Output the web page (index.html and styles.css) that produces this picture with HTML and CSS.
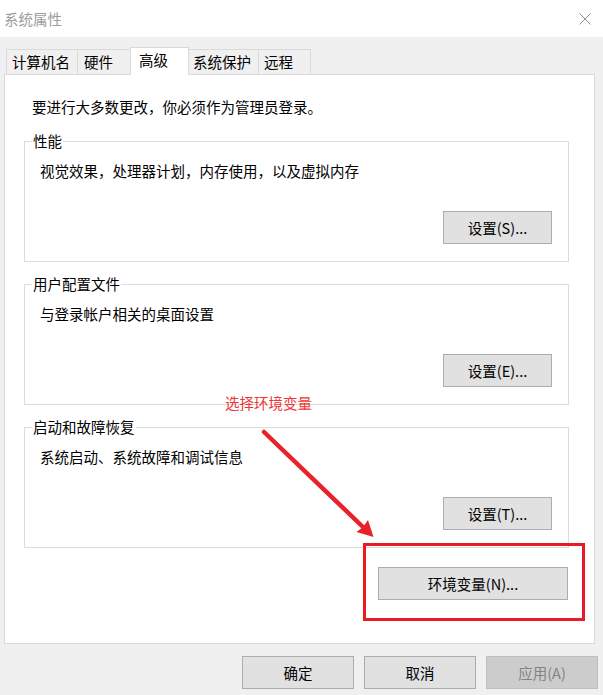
FILE: index.html
```html
<!DOCTYPE html>
<html lang="zh-CN">
<head>
<meta charset="utf-8">
<title>系统属性</title>
<link rel="stylesheet" href="styles.css">
</head>
<body>
<div class="titlebar">
  <span class="title">系统属性</span>
  <svg class="close" width="12" height="12" viewBox="0 0 12 12"><path d="M0.5 0.5 L11.5 11.5 M11.5 0.5 L0.5 11.5" stroke="#8a8a8a" stroke-width="1" fill="none"/></svg>
</div>
<div class="tabs">
  <div class="tab tab-computer">计算机名</div>
  <div class="tab tab-hardware">硬件</div>
  <div class="tab tab-active">高级</div>
  <div class="tab tab-protect">系统保护</div>
  <div class="tab tab-remote">远程</div>
</div>
<div class="panel">
  <p class="intro">要进行大多数更改，你必须作为管理员登录。</p>
  <fieldset class="group">
    <legend>性能</legend>
    <p class="desc">视觉效果，处理器计划，内存使用，以及虚拟内存</p>
    <div class="btn-row"><button class="btn btn-set">设置(S)...</button></div>
  </fieldset>
  <fieldset class="group">
    <legend>用户配置文件</legend>
    <p class="desc">与登录帐户相关的桌面设置</p>
    <div class="btn-row"><button class="btn btn-set">设置(E)...</button></div>
  </fieldset>
  <fieldset class="group group-last">
    <legend>启动和故障恢复</legend>
    <p class="desc">系统启动、系统故障和调试信息</p>
    <div class="btn-row"><button class="btn btn-set">设置(T)...</button></div>
  </fieldset>
  <div class="env-row"><button class="btn btn-env">环境变量(N)...</button></div>
</div>
<div class="footer">
  <button class="btn btn-foot">确定</button>
  <button class="btn btn-foot">取消</button>
  <button class="btn btn-foot btn-disabled">应用(A)</button>
</div>
<div class="note">选择环境变量</div>
<svg class="arrow" width="125" height="120" viewBox="0 0 125 120">
  <line x1="9" y1="7" x2="108" y2="102" stroke="#e8222b" stroke-width="4.5" stroke-linecap="round"/>
  <polygon points="118.5,112 101.5,107 108,102 113,95" fill="#e8222b"/>
</svg>
<div class="highlight"></div>
</body>
</html>
```
FILE: styles.css
```css
* { box-sizing: border-box; }
html, body {
  margin: 0;
  padding: 0;
}
body {
  position: relative;
  width: 603px;
  height: 695px;
  overflow: hidden;
  background: #f0f0f0;
  font-family: "Noto Sans CJK SC", "Noto Sans", sans-serif;
  font-size: 14.5px;
  color: #000;
}
.titlebar {
  height: 37px;
  background: #fff;
  display: flex;
  align-items: center;
  justify-content: space-between;
  padding: 1px 12px 0 4px;
}
.title {
  color: #9d9d9d;
  line-height: 20px;
}
.close { display: block; margin-top: -1px; }

.tabs {
  height: 37px;
  display: flex;
  align-items: flex-end;
  padding: 10px 0 0 6px;
}
.tab {
  flex: none;
  height: 25px;
  border: 1px solid #d9d9d9;
  border-bottom: none;
  background: #f0f0f0;
  margin-right: -1px;
  padding-left: 5px;
  line-height: 24px;
  white-space: nowrap;
}
.tab-computer { width: 72px; }
.tab-hardware { width: 54px; padding-left: 6px; }
.tab-active {
  position: relative;
  z-index: 1;
  width: 59px;
  height: 28px;
  margin-bottom: -1px;
  background: #fff;
  padding-left: 8px;
  line-height: 23px;
}
.tab-protect { width: 71px; padding-left: 4px; }
.tab-remote { width: 53px; padding-left: 5px; }

.panel {
  height: 570px;
  margin: 0 8px 0 4px;
  border: 1px solid #d9d9d9;
  background: #fff;
  padding: 22px 25px 0 19px;
}
.intro {
  margin: 0 0 15px 8px;
  line-height: 20px;
}
.group {
  margin: 0 0 13px;
  padding: 0 16px 17px 15px;
  border: 1px solid #dcdcdc;
  min-width: 0;
}
.group legend {
  margin-left: -8px;
  padding: 0 1px;
  line-height: 18px;
}
.group-last { margin-bottom: 19px; }
.desc {
  margin: 11px 0 0;
  line-height: 20px;
}
.btn-row {
  display: flex;
  justify-content: flex-end;
  margin-top: 30px;
}
.btn {
  font-family: inherit;
  font-size: 14.5px;
  color: #000;
  background: #e1e1e1;
  border: 1px solid #adadad;
  height: 33px;
  padding: 0;
  margin: 0;
  line-height: 20px;
}
.btn-set { width: 109px; }
.env-row {
  display: flex;
  justify-content: flex-end;
  padding-right: 1px;
}
.btn-env { width: 190px; }

.footer {
  display: flex;
  justify-content: flex-end;
  gap: 10px;
  margin-top: 12px;
  padding-right: 5px;
}
.btn-foot { width: 112px; }
.btn-disabled {
  background: #cccccc;
  border-color: #bfbfbf;
  color: #838383;
}

.note {
  position: absolute;
  left: 225px;
  top: 393px;
  color: #ee3535;
  font-size: 14.5px;
  line-height: 20px;
}
.arrow {
  position: absolute;
  left: 255px;
  top: 425px;
}
.highlight {
  position: absolute;
  left: 363px;
  top: 543px;
  width: 222px;
  height: 78px;
  border: 3px solid #e81c24;
}
```
